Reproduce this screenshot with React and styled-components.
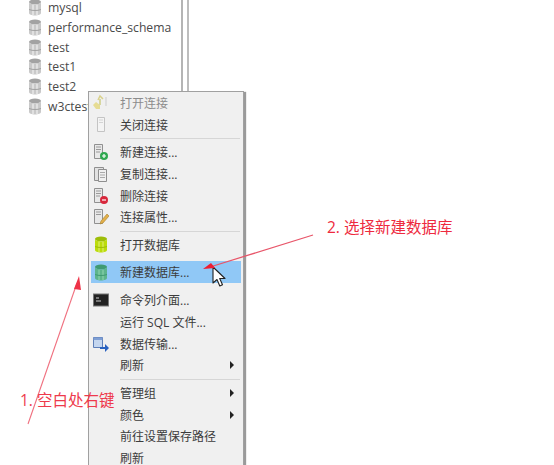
import styled, { createGlobalStyle } from "styled-components";

const GlobalStyle = createGlobalStyle`
  html, body {
    margin: 0;
    background: #fff;
  }
`;

const DB_NAMES = ["mysql", "performance_schema", "test", "test1", "test2", "w3ctest"];

const MENU = [
  { label: "打开连接", icon: "open", disabled: true },
  { label: "关闭连接", icon: "close" },
  { divider: true },
  { label: "新建连接...", icon: "newConn" },
  { label: "复制连接...", icon: "copyConn" },
  { label: "删除连接", icon: "delConn" },
  { label: "连接属性...", icon: "propConn" },
  { divider: true },
  { label: "打开数据库", icon: "openDb" },
  { label: "新建数据库...", icon: "newDb", active: true },
  { label: "命令列介面...", icon: "console" },
  { label: "运行 SQL 文件..." },
  { label: "数据传输...", icon: "transfer" },
  { label: "刷新", submenu: true },
  { divider: true },
  { label: "管理组", submenu: true },
  { label: "颜色", submenu: true },
  { label: "前往设置保存路径" },
  { label: "刷新" },
];

const DbIcon = ({ body = "#c9c9c9", dark = "#a2a2a2", line = "#ededed" }) => (
  <svg width="14" height="17" viewBox="0 0 14 17">
    <ellipse cx="7" cy="3" rx="6" ry="2.500" fill={dark} />
    <path d="M1 3v11c0 1.400 2.700 2.500 6 2.500s6-1.100 6-2.500V3c0 1.400-2.700 2.500-6 2.500S1 4.400 1 3z" fill={body} />
    <path d="M5 6v10M9 6v10" stroke={line} strokeWidth="1.300" />
    <path d="M1 10.500c2 .8 4 1 6 1s4-.2 6-1" stroke={dark} fill="none" />
  </svg>
);

const Page = () => (
  <svg width="14" height="18" viewBox="0 0 14 18">
    <path d="M3.500 1.500h7v14h-7z" fill="#f4f4f4" stroke="#c4c4c4" />
    <path d="M5 4h4M5 6.500h4" stroke="#d4d4d4" />
  </svg>
);

const PageBadge = ({ color, mark }) => (
  <svg width="16" height="18" viewBox="0 0 16 18">
    <path d="M1.500 1.500h8v14h-8z" fill="#e8e8e8" stroke="#909090" />
    <path d="M3 4h5M3 6.500h5M3 9h4" stroke="#9a9a9a" />
    <circle cx="11" cy="13" r="4" fill={color} />
    <path d={mark} stroke="#fff" strokeWidth="1.200" fill="none" />
  </svg>
);

const icons = {
  open: (
    <svg width="20" height="18" viewBox="0 0 20 18">
      <path d="M5 8l4 3v4H5L2 11z" fill="#e6dc93" />
      <path d="M9 11V5" stroke="#d6d6a0" strokeWidth="2" />
      <path d="M7 6l2-4 3 3" stroke="#d8d089" strokeWidth="1.500" fill="none" />
      <path d="M15 3v9" stroke="#dedede" strokeWidth="2" />
    </svg>
  ),
  close: <Page />,
  newConn: <PageBadge color="#2fa84f" mark="M9 13h4M11 11v4" />,
  copyConn: (
    <svg width="16" height="18" viewBox="0 0 16 18">
      <path d="M1.500 2.500h9v13h-9z" fill="#e2e2e2" stroke="#8f8f8f" />
      <path d="M5.500 4.500h8v12h-8z" fill="#f0f0f0" stroke="#8f8f8f" />
      <path d="M7 7.500h5M7 10h5M7 12.500h5" stroke="#aaa" />
    </svg>
  ),
  delConn: <PageBadge color="#d8283c" mark="M9 13h4" />,
  propConn: (
    <svg width="16" height="18" viewBox="0 0 16 18">
      <path d="M1.500 1.500h8v14h-8z" fill="#e8e8e8" stroke="#909090" />
      <path d="M3 4h5M3 6.500h5" stroke="#9a9a9a" />
      <path d="M14 6l-6 7-1 3 3-1 6-7z" fill="#e3b04a" stroke="#a8812e" strokeWidth=".6" />
    </svg>
  ),
  openDb: <DbIcon body="#bcdc0c" dark="#9dbd08" line="#d8ec60" />,
  newDb: <DbIcon body="#5db58c" dark="#3f9a72" line="#86cfa8" />,
  console: (
    <svg width="16" height="14" viewBox="0 0 16 14">
      <rect x=".5" y="1" width="15" height="12" fill="#222" stroke="#777" />
      <path d="M3 5h3M3 8h5" stroke="#ccc" />
    </svg>
  ),
  transfer: (
    <svg width="18" height="18" viewBox="0 0 18 18">
      <path d="M1.500 2.500h9v10h-9z" fill="#c4d6ef" stroke="#5e7fb8" />
      <path d="M1.500 2.500h9v2.500h-9z" fill="#7f9fd4" />
      <path d="M8 12h5V9l4 4-4 4v-3H8z" fill="#2a62c0" />
    </svg>
  ),
};

const Cursor = () => (
  <CursorIcon width="15" height="22" viewBox="0 0 15 22">
    <path
      d="M1 1v16l4-3.500 2.800 6.500 2.700-1.200-2.800-6.300H13z"
      fill="#fff"
      stroke="#222"
      strokeWidth="1.100"
      strokeLinejoin="round"
    />
  </CursorIcon>
);

const App = () => (
  <>
    <GlobalStyle />
    <Screen>
      <TreePanel>
        {DB_NAMES.map((name) => (
          <TreeRow key={name}>
            <DbIcon />
            <TreeLabel>{name}</TreeLabel>
          </TreeRow>
        ))}
      </TreePanel>

      <ContextMenu>
        {MENU.map((item, idx) =>
          item.divider ? (
            <MenuDivider key={idx} />
          ) : (
            <MenuItem key={idx} $active={item.active} $disabled={item.disabled}>
              <MenuIcon>{icons[item.icon]}</MenuIcon>
              <MenuLabel>{item.label}</MenuLabel>
              {item.submenu && <SubmenuCaret />}
            </MenuItem>
          )
        )}
      </ContextMenu>

      <Cursor />

      <Arrows width="554" height="465" viewBox="0 0 554 465">
        <path d="M28 424L77 283" stroke="#f0707f" strokeWidth="1.100" />
        <path d="M79 276l-5 13 7 1z" fill="#ee3348" />
        <path d="M313 235L210 267" stroke="#e8566a" strokeWidth="1.300" />
        <path d="M203 269l8-6 4 5z" fill="#ee1c30" />
      </Arrows>

      <StepOne>1. 空白处右键</StepOne>
      <StepTwo>2. 选择新建数据库</StepTwo>
    </Screen>
  </>
);

export default App;

const Screen = styled.div`
  position: relative;
  width: 554px;
  height: 465px;
  overflow: hidden;
  background: #fff;
  font-family: "Open Sans", "Noto Sans CJK SC", sans-serif;
`;

const TreePanel = styled.div`
  box-sizing: border-box;
  width: 189px;
  height: 122px;
  margin-top: -2px;
  padding-left: 28px;
  border-right: 2px solid #bdbdbd;
  box-shadow: inset -4px 0 0 #fff, inset -6px 0 0 #b4b4b4;
  display: flex;
  flex-direction: column;
`;

const TreeRow = styled.div`
  display: flex;
  align-items: center;
  gap: 6px;
  height: 19.700px;
  flex: none;
`;

const TreeLabel = styled.span`
  font-size: 12.200px;
  color: #4a4a4a;
  white-space: nowrap;
`;

const ContextMenu = styled.div`
  position: absolute;
  left: 88px;
  top: 91px;
  width: 154px;
  background: #f0f0f0;
  border: 1px solid #a0a0a0;
  box-shadow: 2px 1px 1px #9a9a9a;
  display: flex;
  flex-direction: column;
`;

const MenuItem = styled.div`
  display: flex;
  align-items: center;
  height: 21.700px;
  flex: none;
  margin: 0 2px;
  background: ${({ $active }) => ($active ? "#90c8f6" : "transparent")};
  color: ${({ $disabled }) => ($disabled ? "#8c8c8c" : "#3c3c3c")};
  ${({ $active }) => $active && "margin-top: 5.500px; margin-bottom: 6.500px;"}
`;

const MenuIcon = styled.span`
  box-sizing: border-box;
  width: 29px;
  padding-right: 9px;
  flex: none;
  display: flex;
  justify-content: center;
  align-items: center;
`;

const MenuLabel = styled.span`
  flex: 1;
  font-size: 12px;
  white-space: nowrap;
`;

const SubmenuCaret = styled.span`
  width: 0;
  height: 0;
  margin-right: 7px;
  border-left: 4px solid #222;
  border-top: 4px solid transparent;
  border-bottom: 4px solid transparent;
`;

const MenuDivider = styled.div`
  height: 1px;
  margin: 2.500px 3px 2.500px 31px;
  background: #d6d6d6;
  flex: none;
`;

const CursorIcon = styled.svg`
  position: absolute;
  left: 212px;
  top: 266px;
`;

const Arrows = styled.svg`
  position: absolute;
  left: 0;
  top: 0;
  pointer-events: none;
`;

const StepOne = styled.div`
  position: absolute;
  left: 20px;
  top: 389px;
  font-size: 15.500px;
  line-height: 22px;
  color: #ee3a4c;
  white-space: nowrap;
`;

const StepTwo = styled.div`
  position: absolute;
  left: 327px;
  top: 216px;
  font-size: 15.500px;
  line-height: 22px;
  color: #ee2a3e;
  white-space: nowrap;
`;
